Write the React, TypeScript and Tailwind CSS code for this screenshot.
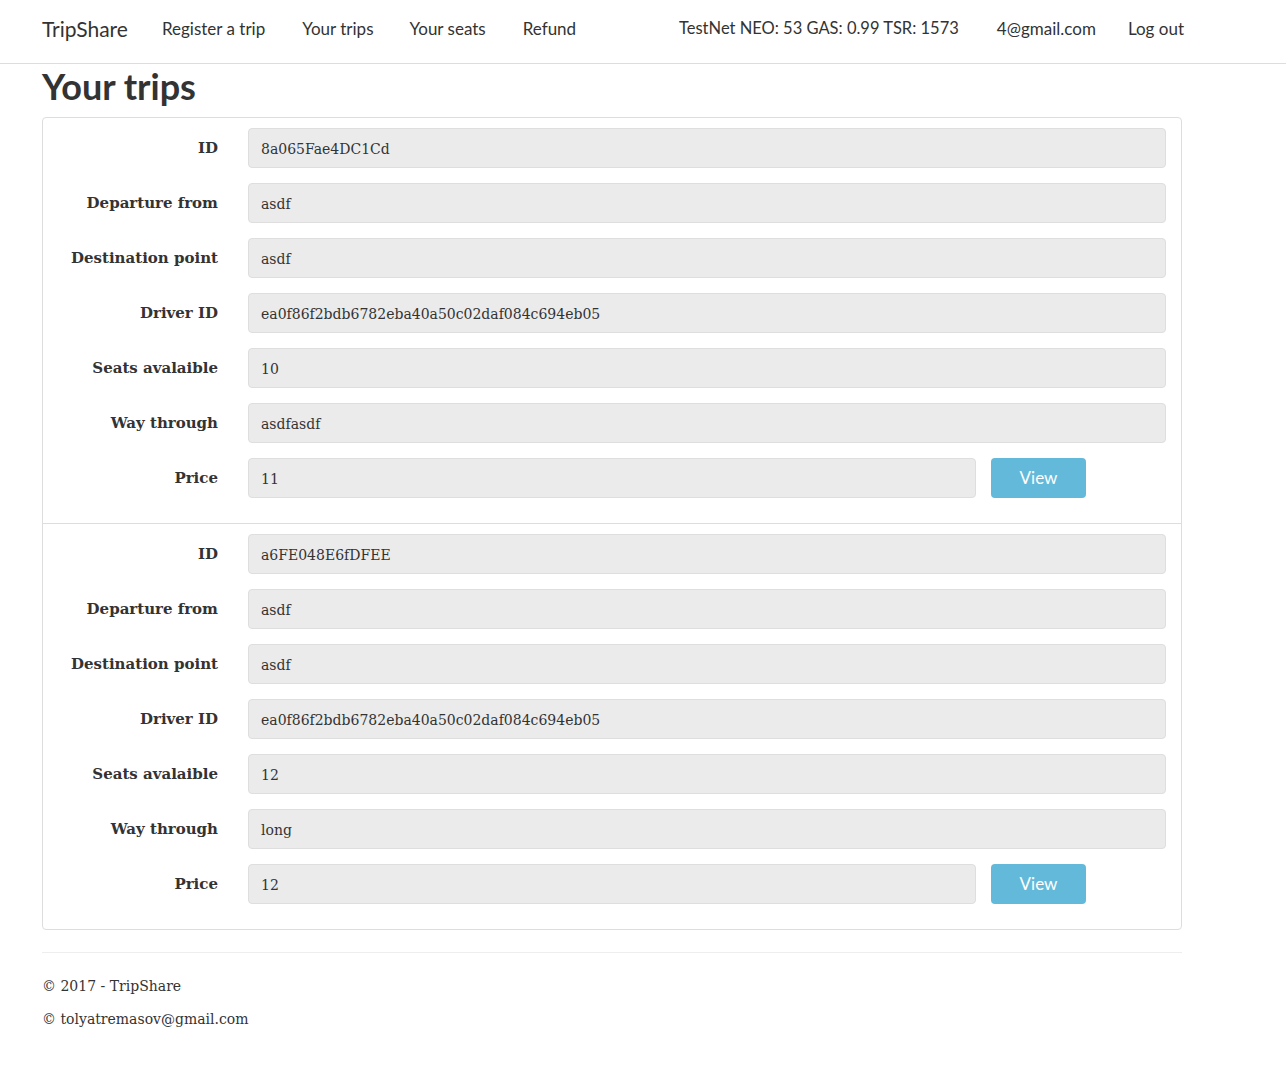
import React from "react";

type Trip = {
  id: string;
  from: string;
  to: string;
  driver: string;
  seats: string;
  way: string;
  price: string;
};

const trips: Trip[] = [
  {
    id: "8a065Fae4DC1Cd",
    from: "asdf",
    to: "asdf",
    driver: "ea0f86f2bdb6782eba40a50c02daf084c694eb05",
    seats: "10",
    way: "asdfasdf",
    price: "11",
  },
  {
    id: "a6FE048E6fDFEE",
    from: "asdf",
    to: "asdf",
    driver: "ea0f86f2bdb6782eba40a50c02daf084c694eb05",
    seats: "12",
    way: "long",
    price: "12",
  },
];

const serif = "font-['DejaVu_Serif','Liberation_Serif',serif]";
const sans = "font-['Lato','Open_Sans',sans-serif]";

function Field({ value, className = "" }: { value: string; className?: string }) {
  return (
    <div
      className={`h-10 flex items-center rounded-[4px] border border-[#dedede] bg-[#ebebeb] pl-3 pt-[2px] text-[14px] text-[#333] ${className}`}
    >
      {value}
    </div>
  );
}

function Row({ label, children }: { label: string; children: React.ReactNode }) {
  return (
    <div className="flex items-center">
      <div className="w-[205px] shrink-0 pr-[30px] text-right text-[15px] font-bold text-[#333]">
        {label}
      </div>
      <div className="flex-1">{children}</div>
    </div>
  );
}

function TripBlock({ t, last }: { t: Trip; last: boolean }) {
  return (
    <div
      className={`flex flex-col gap-[15px] pt-[10px] pb-[25px] pr-[15px] ${
        last ? "" : "border-b border-[#ddd]"
      }`}
    >
      <Row label="ID">
        <Field value={t.id} />
      </Row>
      <Row label="Departure from">
        <Field value={t.from} />
      </Row>
      <Row label="Destination point">
        <Field value={t.to} />
      </Row>
      <Row label="Driver ID">
        <Field value={t.driver} />
      </Row>
      <Row label="Seats avalaible">
        <Field value={t.seats} />
      </Row>
      <Row label="Way through">
        <Field value={t.way} />
      </Row>
      <Row label="Price">
        <div className="flex items-center">
          <Field value={t.price} className="w-[728px]" />
          <button
            className={`ml-[15px] h-10 w-[95px] rounded-[4px] bg-[#63b9d9] text-[17px] text-white ${sans}`}
          >
            View
          </button>
        </div>
      </Row>
    </div>
  );
}

export default function App() {
  return (
    <div className={`min-h-screen bg-white text-[#333] ${serif}`}>
      <nav
        className={`h-16 border-b border-[#ddd] flex items-center pl-[42px] pr-[102px] pb-[6px] text-[17px] text-[#333] ${sans}`}
      >
        <span className="text-[21px] text-[#333]">TripShare</span>
        <span className="ml-[34px]">Register a trip</span>
        <span className="ml-[37px]">Your trips</span>
        <span className="ml-[36px]">Your seats</span>
        <span className="ml-[37px]">Refund</span>
        <div className="ml-auto flex items-center">
          <span className="text-[16.5px]">TestNet NEO: 53 GAS: 0.99 TSR: 1573</span>
          <span className="ml-[38px]">4@gmail.com</span>
          <span className="ml-[32px]">Log out</span>
        </div>
      </nav>

      <main className="ml-[42px] w-[1140px]">
        <h1
          className={`h-10 mt-[2px] mb-[11px] text-[36px] leading-10 font-bold text-[#333] ${sans}`}
        >
          Your trips
        </h1>
        <div className="rounded-[4px] border border-[#ddd]">
          {trips.map((t, i) => (
            <TripBlock key={i} t={t} last={i === trips.length - 1} />
          ))}
        </div>
        <hr className="mt-[22px] border-t border-[#eee]" />
        <footer className="pt-[22px] text-[14px] text-[#333]">
          <p className="leading-[23px]">© 2017 - TripShare</p>
          <p className="mt-[10px] leading-[23px]">© tolyatremasov@gmail.com</p>
        </footer>
      </main>
    </div>
  );
}
